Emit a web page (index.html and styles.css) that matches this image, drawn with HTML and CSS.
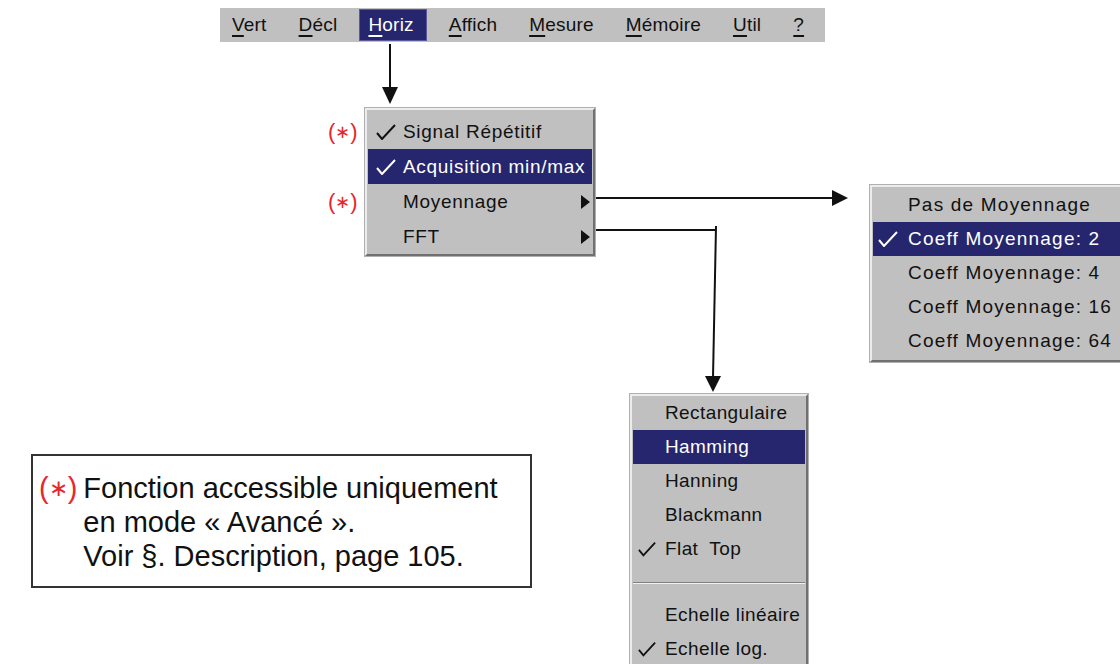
FILE: index.html
```html
<!DOCTYPE html>
<html lang="fr">
<head>
    <meta charset="UTF-8">
    <meta name="viewport" content="width=device-width, initial-scale=1.0">
    <title>Menu Horiz</title>
    <link rel="stylesheet" href="styles.css">
</head>
<body>
    <div class="canvas">
        <!-- barre de menus -->
        <div class="menubar">
            <span class="mb-item"><u>V</u>ert</span>
            <span class="mb-item"><u>D</u>écl</span>
            <span class="mb-item active"><u>H</u>oriz</span>
            <span class="mb-item"><u>A</u>ffich</span>
            <span class="mb-item"><u>M</u>esure</span>
            <span class="mb-item"><u>M</u>émoire</span>
            <span class="mb-item"><u>U</u>til</span>
            <span class="mb-item"><u>?</u></span>
        </div>

        <!-- fleches -->
        <svg class="wires" width="1120" height="664" viewBox="0 0 1120 664">
            <g stroke="#111" stroke-width="2" fill="none">
                <line x1="390" y1="44" x2="390" y2="90"/>
                <line x1="596" y1="198" x2="834" y2="198"/>
                <polyline points="596,230 716,230"/>
                <line x1="716" y1="226" x2="713" y2="378"/>
            </g>
            <g fill="#111">
                <polygon points="382,87 398,87 390,104"/>
                <polygon points="832,190 848,198 832,206"/>
                <polygon points="705,376 721,376 713,392"/>
            </g>
        </svg>

        <!-- menu Horiz -->
        <div class="menu menu-horiz">
            <div class="row">
                <span class="mark">(<span class="ast">∗</span>)</span>
                <span class="chk"><svg width="20" height="16" viewBox="0 0 20 16"><path d="M1 9 L6 15 L19 1" stroke="#111" stroke-width="2" fill="none"/></svg></span>
                <span class="lbl">Signal Répétitif</span>
            </div>
            <div class="row sel">
                <span class="chk"><svg width="20" height="16" viewBox="0 0 20 16"><path d="M1 9 L6 15 L19 1" stroke="#fff" stroke-width="2" fill="none"/></svg></span>
                <span class="lbl">Acquisition min/max</span>
            </div>
            <div class="row">
                <span class="mark">(<span class="ast">∗</span>)</span>
                <span class="chk"></span>
                <span class="lbl">Moyennage</span>
                <span class="sub"></span>
            </div>
            <div class="row">
                <span class="chk"></span>
                <span class="lbl">FFT</span>
                <span class="sub"></span>
            </div>
        </div>

        <!-- sous-menu Moyennage -->
        <div class="menu menu-moy">
            <div class="row"><span class="chk"></span><span class="lbl">Pas de Moyennage</span></div>
            <div class="row sel">
                <span class="chk"><svg width="20" height="16" viewBox="0 0 20 16"><path d="M1 9 L6 15 L19 1" stroke="#fff" stroke-width="2" fill="none"/></svg></span>
                <span class="lbl">Coeff Moyennage: 2</span>
            </div>
            <div class="row"><span class="chk"></span><span class="lbl">Coeff Moyennage: 4</span></div>
            <div class="row"><span class="chk"></span><span class="lbl">Coeff Moyennage: 16</span></div>
            <div class="row"><span class="chk"></span><span class="lbl">Coeff Moyennage: 64</span></div>
        </div>

        <!-- sous-menu FFT -->
        <div class="menu menu-fft">
            <div class="row"><span class="chk"></span><span class="lbl">Rectangulaire</span></div>
            <div class="row sel"><span class="chk"></span><span class="lbl">Hamming</span></div>
            <div class="row"><span class="chk"></span><span class="lbl">Hanning</span></div>
            <div class="row"><span class="chk"></span><span class="lbl">Blackmann</span></div>
            <div class="row">
                <span class="chk"><svg width="18" height="16" viewBox="0 0 20 16"><path d="M1 9 L6 15 L19 1" stroke="#111" stroke-width="2" fill="none"/></svg></span>
                <span class="lbl">Flat&nbsp; Top</span>
            </div>
            <div class="sep"></div>
            <div class="row"><span class="chk"></span><span class="lbl">Echelle linéaire</span></div>
            <div class="row">
                <span class="chk"><svg width="18" height="16" viewBox="0 0 20 16"><path d="M1 9 L6 15 L19 1" stroke="#111" stroke-width="2" fill="none"/></svg></span>
                <span class="lbl">Echelle log.</span>
            </div>
        </div>

        <!-- note -->
        <div class="note">
            <span class="note-mark">(<span class="ast">∗</span>)</span>
            <div class="note-text">
                Fonction accessible uniquement<br>
                en mode « Avancé ».<br>
                Voir §. Description, page 105.
            </div>
        </div>
    </div>
</body>
</html>
```

FILE: styles.css
```css
body {
    margin: 0;
    background: #fff;
    font-family: "Liberation Sans", Arial, sans-serif;
}
.canvas {
    position: relative;
    width: 1120px;
    height: 664px;
    overflow: hidden;
    background: #fff;
}

/* barre de menus */
.menubar {
    position: absolute;
    left: 220px;
    top: 8px;
    width: 605px;
    height: 34px;
    background: #c0c0c0;
    display: flex;
    align-items: center;
    gap: 12px;
    padding-left: 2px;
    box-sizing: border-box;
    font-size: 19px;
    color: #111;
}
.mb-item {
    padding: 0 10px;
    height: 30px;
    line-height: 30px;
    letter-spacing: 0.2px;
}
.mb-item u {
    text-decoration-thickness: 2px;
    text-underline-offset: 4px;
}
.mb-item.active {
    background: #26266e;
    color: #fff;
    border: 1px solid #5a5a9a;
    padding: 0 12px 0 8px;
}

.wires {
    position: absolute;
    left: 0;
    top: 0;
}

/* menus deroulants */
.menu {
    position: absolute;
    background: #c0c0c0;
    border: 2px solid;
    border-color: #ececec #707070 #707070 #ececec;
    box-shadow: 0 0 0 1px #b0b0b0;
    padding: 4px 1px 0;
    font-size: 19px;
    color: #111;
    letter-spacing: 0.4px;
}
.menu .row {
    position: relative;
    display: flex;
    align-items: center;
    height: 35px;
    white-space: nowrap;
}
.menu .row.sel {
    background: #26266e;
    color: #fff;
}
.chk {
    display: flex;
    align-items: center;
    flex: none;
    width: 35px;
    height: 100%;
    padding-left: 8px;
    box-sizing: border-box;
}
.sub {
    margin-left: auto;
    margin-right: 2px;
    width: 0;
    height: 0;
    border-left: 9px solid #111;
    border-top: 7px solid transparent;
    border-bottom: 7px solid transparent;
}
.mark {
    position: absolute;
    left: -40px;
    color: #e8262c;
    font-size: 22px;
    letter-spacing: 0;
}
.ast {
    font-size: 0.8em;
    vertical-align: 0.08em;
}

.menu-horiz {
    left: 365px;
    top: 108px;
    width: 224px;
    letter-spacing: 0.7px;
}
.menu-moy {
    left: 870px;
    top: 185px;
    width: 280px;
    padding: 1px 1px 2px;
    letter-spacing: 1.2px;
}
.menu-moy .row {
    height: 34px;
}
.menu-moy .chk {
    padding-left: 5px;
}
.menu-fft {
    left: 630px;
    top: 394px;
    width: 172px;
    height: 300px;
    padding-top: 0;
    border-bottom: none;
}
.menu-fft .row {
    height: 34px;
}
.menu-fft .chk {
    width: 32px;
    padding-left: 5px;
}
.sep {
    margin: 16px 0 14px;
    border-top: 1px solid #808080;
    border-bottom: 1px solid #f0f0f0;
}

/* note */
.note {
    position: absolute;
    left: 31px;
    top: 454px;
    width: 501px;
    height: 134px;
    box-sizing: border-box;
    border: 2px solid #333;
    display: flex;
    gap: 6px;
    padding: 15px 0 0 6px;
    font-size: 29px;
    line-height: 34px;
    color: #111;
}
.note-mark {
    color: #e8262c;
    flex: none;
}
```
